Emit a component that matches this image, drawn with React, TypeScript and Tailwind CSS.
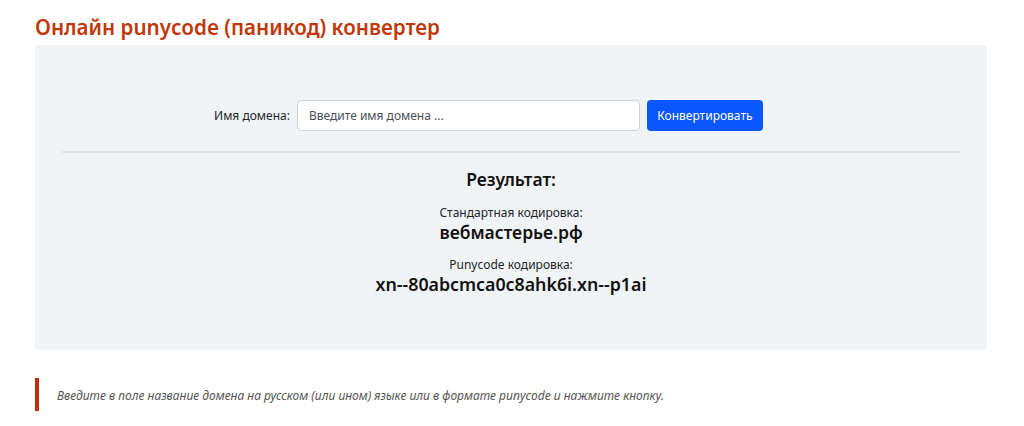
export default function App() {
  const font = { fontFamily: '"Noto Sans", "Open Sans", sans-serif' };
  return (
    <div className="w-[1024px] h-[426px] bg-white overflow-hidden" style={font}>
      <div className="pl-[35px] pr-[37px]">
        <h1 className="pt-[12px] h-[45px] text-[20.6px] leading-[30px] font-semibold text-[#c0380a]">
          Онлайн punycode (паникод) конвертер
        </h1>
        <div className="bg-[#f1f4f6] rounded-[4px] h-[305px] pt-[55px] px-[27px]">
          <div className="flex items-center justify-center pr-[45px]">
            <label className="text-[12px] text-[#212529] mr-[7px]">Имя домена:</label>
            <input
              className="w-[343px] h-[31px] bg-white border border-[#ced4da] rounded-[4px] px-[11px] text-[12px] text-[#495057] placeholder:text-[#495057] outline-none"
              placeholder="Введите имя домена ..."
            />
            <button className="ml-[7px] w-[116px] h-[31px] bg-[#0b57ff] text-white text-[12px] rounded-[4px]">
              Конвертировать
            </button>
          </div>
          <div className="mt-[20px] border-t-2 border-[#dfe3e6]" />
          <div className="flex flex-col items-center text-[#111]">
            <div className="mt-[14px] text-[17.5px] leading-[24px] font-semibold">Результат:</div>
            <div className="mt-[14px] text-[12px] leading-[16px] text-[#212529]">Стандартная кодировка:</div>
            <div className="-mt-[2px] text-[17.5px] leading-[26px] font-semibold">вебмастерье.рф</div>
            <div className="mt-[12px] text-[12px] leading-[16px] text-[#212529]">Punycode кодировка:</div>
            <div className="-mt-[2px] text-[17.8px] leading-[26px] font-semibold">xn--80abcmca0c8ahk6i.xn--p1ai</div>
          </div>
        </div>
        <div className="mt-[28px] border-l-4 border-[#c52a0a] h-[33px] flex items-center pl-[18px] pt-[2px]">
          <p className="italic text-[12px] text-[#555]">
            Введите в поле название домена на русском (или ином) языке или в формате punycode и нажмите кнопку.
          </p>
        </div>
      </div>
    </div>
  );
}
